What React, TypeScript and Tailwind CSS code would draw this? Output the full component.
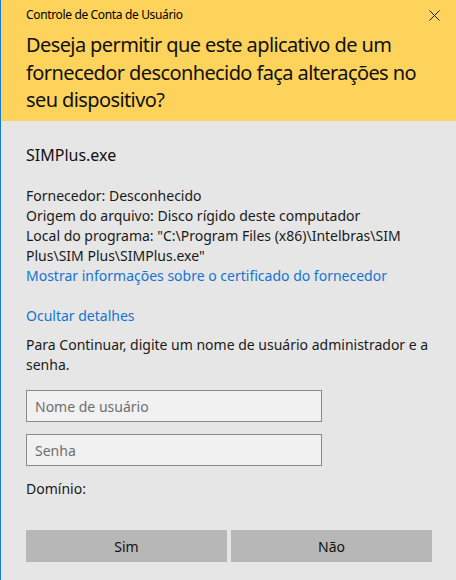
import React from 'react';

const font = { fontFamily: '"Segoe UI", "Noto Sans", "Open Sans", sans-serif' };

export default function App() {
  return (
    <div
      className="w-[456px] h-[580px] bg-[#e6e6e6] border-l border-[#1979ca] flex flex-col text-black"
      style={font}
    >
      {/* Yellow header */}
      <div className="bg-[#fdd35c] h-[121px] pl-[25px] pr-[14px] flex flex-col">
        <div className="h-[30px] flex items-center justify-between">
          <span className="text-[12px] leading-none tracking-[-0.35px]">Controle de Conta de Usuário</span>
          <svg width="11" height="11" viewBox="0 0 11 11" className="mr-[2px]">
            <path d="M0.5 0.5 L10.5 10.5 M10.5 0.5 L0.5 10.5" stroke="#1a1a1a" strokeWidth="1" />
          </svg>
        </div>
        <h1 className="mt-px text-[20px] leading-[27.5px] tracking-[-0.6px] text-[#111] font-normal pr-[20px]">
          Deseja permitir que este aplicativo de um fornecedor desconhecido faça alterações no seu dispositivo?
        </h1>
      </div>

      {/* Body */}
      <div className="pl-[25px] pr-[20px] flex flex-col">
        <div className="mt-[23px] text-[16px] leading-[22px] text-[#111]">SIMPlus.exe</div>

        <div className="mt-[20px] text-[14px] leading-[20px] text-[#1a1a1a]">
          <p>Fornecedor: Desconhecido</p>
          <p>Origem do arquivo: Disco rígido deste computador</p>
          <p>Local do programa: "C:\Program Files (x86)\Intelbras\SIM Plus\SIM Plus\SIMPlus.exe"</p>
          <p className="text-[#1573d1]">Mostrar informações sobre o certificado do fornecedor</p>
        </div>

        <div className="mt-[20px] text-[14px] leading-[20px] text-[#1573d1]">Ocultar detalhes</div>

        <p className="mt-[9px] text-[14px] leading-[20px] text-[#1a1a1a] pr-[4px]">
          Para Continuar, digite um nome de usuário administrador e a senha.
        </p>

        <div className="mt-[15px] w-[296px] h-[32px] border border-[#8a8a8a] bg-[#f1f1f1] flex items-center pl-[8px] text-[14px] text-[#6e6e6e]">
          Nome de usuário
        </div>
        <div className="mt-[12px] w-[296px] h-[32px] border border-[#8a8a8a] bg-[#f1f1f1] flex items-center pl-[8px] text-[14px] text-[#6e6e6e]">
          Senha
        </div>

        <div className="mt-[13px] text-[14px] leading-[20px] text-[#1a1a1a]">Domínio:</div>

        <div className="mt-[31px] flex gap-[4px]">
          <button className="w-[201px] h-[32px] bg-[#b7b7b7] text-[14px] text-[#111]">Sim</button>
          <button className="w-[201px] h-[32px] bg-[#b7b7b7] text-[14px] text-[#111]">Não</button>
        </div>
      </div>
    </div>
  );
}
